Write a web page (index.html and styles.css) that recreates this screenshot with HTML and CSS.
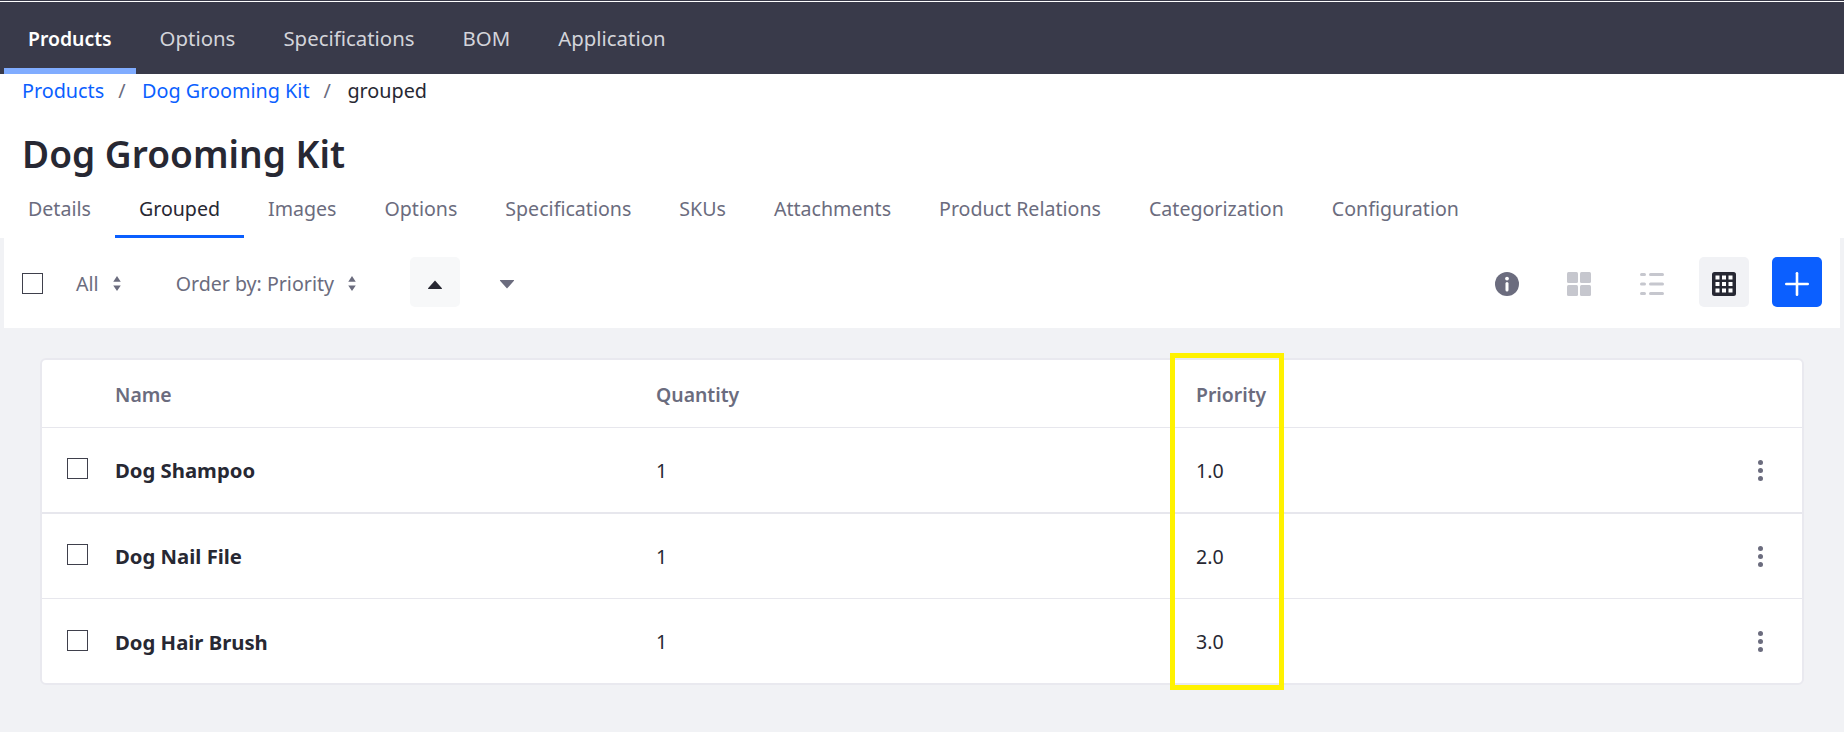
FILE: index.html
```html
<!DOCTYPE html>
<html lang="en">
	<head>
		<title>Dog Grooming Kit</title>
		<meta charset="utf-8">
		<link rel="stylesheet" href="styles.css">
	</head>

	<body>
		<nav class="topNav">
			<a class="topNavItem active">Products</a>
			<a class="topNavItem">Options</a>
			<a class="topNavItem">Specifications</a>
			<a class="topNavItem">BOM</a>
			<a class="topNavItem">Application</a>
		</nav>

		<header class="pageHead">
			<div class="breadcrumb">
				<a>Products</a><span class="sep">/</span><a>Dog Grooming Kit</a><span class="sep">/</span><span class="current">grouped</span>
			</div>
			<h1 class="pageTitle">Dog Grooming Kit</h1>
			<div class="tabs">
				<a class="tab">Details</a>
				<a class="tab active">Grouped</a>
				<a class="tab">Images</a>
				<a class="tab">Options</a>
				<a class="tab">Specifications</a>
				<a class="tab">SKUs</a>
				<a class="tab">Attachments</a>
				<a class="tab">Product Relations</a>
				<a class="tab">Categorization</a>
				<a class="tab">Configuration</a>
			</div>
		</header>

		<div class="toolbar">
			<span class="check"></span>
			<span class="filter filterAll">All
				<svg class="updown" viewBox="0 0 8 16"><path d="M4 0l4 6H0zM4 16L0 10h8z"/></svg>
			</span>
			<span class="filter filterOrder">Order by: Priority
				<svg class="updown" viewBox="0 0 8 16"><path d="M4 0l4 6H0zM4 16L0 10h8z"/></svg>
			</span>
			<button class="toolBtn sortUp">
				<svg class="tri" viewBox="0 0 16 10"><path d="M8 0.5l7.5 8.5a.5.5 0 0 1-.4.9H.9a.5.5 0 0 1-.4-.9z"/></svg>
			</button>
			<button class="toolBtn sortDown">
				<svg class="tri" viewBox="0 0 16 10"><path d="M8 9.5L.5 1A.5.5 0 0 1 .9 0h14.2a.5.5 0 0 1 .4 1z"/></svg>
			</button>

			<div class="toolRight">
				<button class="toolBtn">
					<svg class="icon" viewBox="0 0 24 24">
						<circle cx="12" cy="12" r="12" fill="#6b6c7e"/>
						<circle cx="12" cy="6.6" r="1.9" fill="#fff"/>
						<rect x="10.5" y="10" width="3" height="9.5" rx="1.5" fill="#fff"/>
					</svg>
				</button>
				<button class="toolBtn">
					<svg class="icon" viewBox="0 0 24 24" fill="#c6c7ce">
						<rect width="11" height="11" rx="1.5"/>
						<rect x="13" width="11" height="11" rx="1.5"/>
						<rect y="13" width="11" height="11" rx="1.5"/>
						<rect x="13" y="13" width="11" height="11" rx="1.5"/>
					</svg>
				</button>
				<button class="toolBtn">
					<svg class="icon" viewBox="0 0 24 24" fill="#c6c7ce">
						<rect y="1" width="6" height="3" rx="1.5"/>
						<rect x="9" y="1" width="15" height="3" rx="1.5"/>
						<rect y="10.5" width="6" height="3" rx="1.5"/>
						<rect x="9" y="10.5" width="15" height="3" rx="1.5"/>
						<rect y="20" width="6" height="3" rx="1.5"/>
						<rect x="9" y="20" width="15" height="3" rx="1.5"/>
					</svg>
				</button>
				<button class="toolBtn selected">
					<svg class="icon" viewBox="0 0 24 24">
						<rect width="24" height="24" rx="2.5" fill="#272833"/>
						<g fill="#fff">
							<rect x="3.5" y="3.5" width="4" height="4"/><rect x="10" y="3.5" width="4" height="4"/><rect x="16.5" y="3.5" width="4" height="4"/>
							<rect x="3.5" y="10" width="4" height="4"/><rect x="10" y="10" width="4" height="4"/><rect x="16.5" y="10" width="4" height="4"/>
							<rect x="3.5" y="16.5" width="4" height="4"/><rect x="10" y="16.5" width="4" height="4"/><rect x="16.5" y="16.5" width="4" height="4"/>
						</g>
					</svg>
				</button>
				<button class="toolBtn addBtn">
					<svg class="icon" viewBox="0 0 24 24" fill="#fff">
						<rect x="10.7" width="2.6" height="24" rx="1.3"/>
						<rect y="10.7" width="24" height="2.6" rx="1.3"/>
					</svg>
				</button>
			</div>
		</div>

		<main class="content">
			<section class="card">
				<div class="row headRow">
					<span></span><span>Name</span><span>Quantity</span><span>Priority</span><span></span>
				</div>
				<div class="row thick">
					<span><i class="check"></i></span><strong>Dog Shampoo</strong><span>1</span><span>1.0</span>
					<span class="kebab"><i></i><i></i><i></i></span>
				</div>
				<div class="row">
					<span><i class="check"></i></span><strong>Dog Nail File</strong><span>1</span><span>2.0</span>
					<span class="kebab"><i></i><i></i><i></i></span>
				</div>
				<div class="row last">
					<span><i class="check"></i></span><strong>Dog Hair Brush</strong><span>1</span><span>3.0</span>
					<span class="kebab"><i></i><i></i><i></i></span>
				</div>
				<div class="highlight"></div>
			</section>
		</main>
	</body>
</html>
```

FILE: styles.css
```css
* {
	box-sizing: border-box;
}

body {
	margin: 0;
	height: 100vh;
	overflow: hidden;
	background-color: #f1f2f5;
	color: #272833;
	font-family: "Noto Sans", "Open Sans", sans-serif;
	font-size: 19.6px;
}

/* top dark nav */
.topNav {
	display: flex;
	height: 74px;
	padding-left: 4px;
	border-top: 1px solid #393a4a;
	box-shadow: inset 0 1px 0 #fff;
	background-color: #393a4a;
	font-size: 20.4px;
}

.topNavItem {
	display: flex;
	align-items: center;
	padding: 7px 24px 0;
	color: #d3d4da;
	border-bottom: 6px solid transparent;
}

.topNavItem.active {
	color: #fff;
	font-size: 19.4px;
	font-weight: 600;
	border-bottom-color: #80acff;
}

/* header */
.pageHead {
	height: 164px;
	background-color: #fff;
	display: flex;
	flex-direction: column;
}

.breadcrumb {
	display: flex;
	align-items: center;
	height: 32px;
	padding-left: 22px;
	font-size: 19.8px;
}

.breadcrumb a {
	color: #0b5fff;
}

.breadcrumb .sep {
	color: #6b6c7e;
	margin: 0 16.5px 0 14px;
}

.pageTitle {
	margin: 0;
	height: 71px;
	padding: 26px 0 0 22px;
	font-size: 37.1px;
	line-height: 44px;
	font-weight: 600;
}

.tabs {
	display: flex;
	margin-top: auto;
	height: 57px;
	padding-left: 4px;
	font-size: 19.6px;
}

.tab {
	display: flex;
	align-items: center;
	padding: 1px 24px 0;
	color: #6b6c7e;
	border-bottom: 3px solid transparent;
}

.tab.active {
	color: #272833;
	border-bottom-color: #0b5fff;
}

/* toolbar */
.toolbar {
	display: flex;
	align-items: center;
	height: 90px;
	margin: 0 4px;
	padding: 0 18px;
	background-color: #fff;
}

.check {
	display: block;
	width: 21px;
	height: 21px;
	background-color: #fff;
	border: 1.5px solid #3f404c;
}

.filter {
	display: flex;
	align-items: center;
	color: #6b6c7e;
}

.filterAll {
	margin-left: 33px;
}

.filterOrder {
	margin-left: 55px;
}

.updown {
	width: 8px;
	height: 15px;
	margin-left: 14px;
	fill: #6b6c7e;
}

.toolBtn {
	display: flex;
	align-items: center;
	justify-content: center;
	width: 50px;
	height: 50px;
	margin-top: -2px;
	padding: 4px 0 0;
	border: 0;
	border-radius: 5px;
	background: transparent;
}

.sortUp {
	margin-left: 54px;
	background-color: #f7f8f9;
}

.sortDown {
	margin-left: 22px;
}

.tri {
	width: 16px;
	height: 9px;
	fill: #272833;
}

.sortDown .tri {
	fill: #6b6c7e;
}

.icon {
	width: 24px;
	height: 24px;
}

.toolRight {
	display: flex;
	align-items: center;
	gap: 22.6px;
	margin-left: auto;
}

.toolBtn.selected {
	background-color: #f1f2f5;
}

.addBtn {
	background-color: #0b5fff;
}

/* table card */
.content {
	padding: 30px 40px 0 40px;
}

.card {
	position: relative;
	height: 327px;
	background-color: #fff;
	border: 2px solid #e9e9ef;
	border-radius: 6px;
}

.row {
	display: grid;
	grid-template-columns: 73px 541px 540px 1fr 83px;
	align-items: center;
	height: 85px;
	border-bottom: 1px solid #e7e7ed;
}

.row.thick {
	height: 86px;
	border-bottom-width: 2px;
}

.row.last {
	border-bottom: 0;
}

.headRow {
	height: 68px;
	padding-top: 2px;
	color: #6b6c7e;
	font-size: 19.4px;
	font-weight: 600;
}

.row strong {
	font-size: 20.3px;
	font-weight: 700;
}

.row .check {
	margin: -3px 0 0 25px;
}

.kebab {
	display: flex;
	flex-direction: column;
	align-items: center;
	gap: 3px;
}

.kebab i {
	width: 5px;
	height: 5px;
	border-radius: 50%;
	background-color: #6b6c7e;
}

.highlight {
	position: absolute;
	left: 1128px;
	top: -7px;
	width: 114px;
	height: 337px;
	border: 5px solid #fff200;
	pointer-events: none;
}
```
